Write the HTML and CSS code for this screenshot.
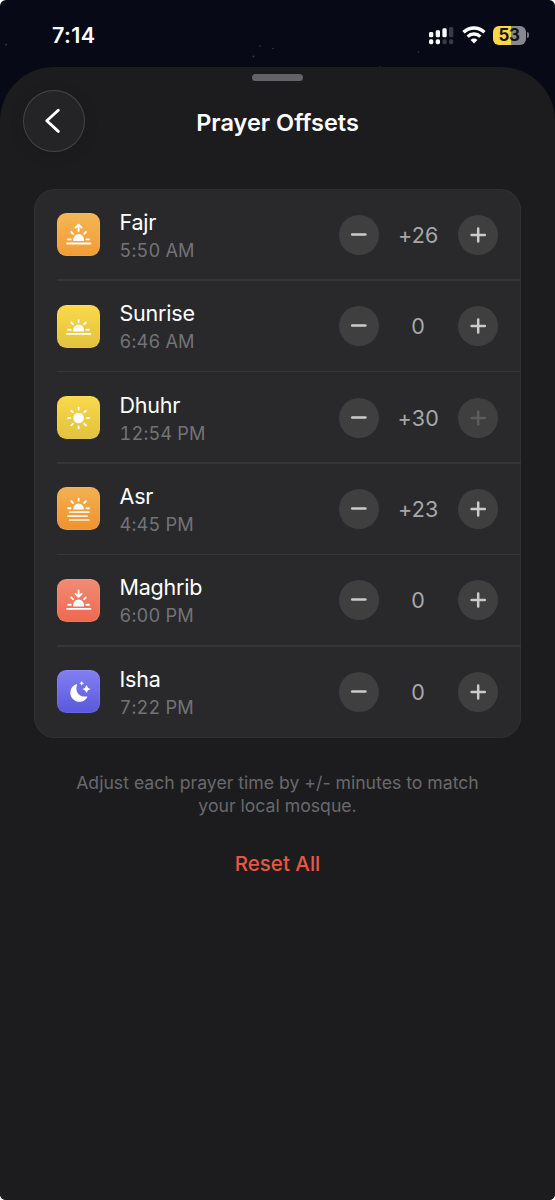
FILE: index.html
```html
<!DOCTYPE html>
<html lang="en">
<head>
<meta charset="utf-8">
<title>Prayer Offsets</title>
<link rel="stylesheet" href="styles.css">
</head>
<body>
<svg width="0" height="0" class="defs">
  <defs>
    <g id="halfsun">
      <path d="M16.200 28v-1.500a5.400 5.400 0 0 1 10.800 0v1.500z" fill="#fff"/>
      <path d="M11.200 26.400h2.600M29.400 26.400h2.600M14.300 19l1.700 1.800M28.900 19l-1.700 1.800" class="ln"/>
    </g>
    <path id="horizon" d="M10 30.500h23.400" class="ln"/>
    <path id="topray" d="M21.600 16.800v1.800" class="ln"/>
    <path id="minus" d="M13.200 19.600h13.200" class="sign"/>
    <path id="plus" d="M13.600 20h13.200M20.200 13.400v13.200" class="sign"/>
  </defs>
</svg>
<div class="screen">
  <svg class="stars" width="555" height="70" viewBox="0 0 555 70" fill="#3a3d4c">
    <circle cx="6" cy="44.500" r=".9"/><circle cx="260" cy="46" r=".8"/><circle cx="273" cy="48.500" r=".8"/><circle cx="253.500" cy="56.500" r=".9"/><circle cx="418.500" cy="52" r=".8"/><circle cx="380" cy="67" r=".8"/>
  </svg>
  <header class="status">
    <span class="clock">7:14</span>
    <div class="indicators">
      <svg class="signal" width="25" height="19" viewBox="0 0 25 19" fill="#fff">
        <rect x="0" y="6" width="4.300" height="5.300" rx="1.400"/><rect x="6.700" y="4.300" width="4.300" height="7" rx="1.400"/><rect x="13.400" y="2.300" width="4.300" height="9" rx="1.400"/><rect x="20" y="1" width="4.300" height="10.300" rx="1.400" fill="#383a45"/>
        <rect x="0" y="13.300" width="4.300" height="5" rx="1.700"/><rect x="6.700" y="13.300" width="4.300" height="5" rx="1.700"/><rect x="13.400" y="13.300" width="4.300" height="5" rx="1.700" fill="#383a45"/><rect x="20" y="13.300" width="4.300" height="5" rx="1.700" fill="#383a45"/>
      </svg>
      <svg class="wifi" width="24" height="18" viewBox="0 0 24 18" fill="none" stroke="#fff" stroke-width="3.300">
        <path d="M1.500 6.300a15 15 0 0 1 21 0"/><path d="M5.600 10.600a9.200 9.200 0 0 1 12.800 0"/><path d="M12 17.400l-3.400-3.400a4.800 4.800 0 0 1 6.800 0z" fill="#fff" stroke="none"/>
      </svg>
      <div class="battery"><span>53</span></div>
      <i class="nub"></i>
    </div>
  </header>
  <main class="sheet">
    <div class="grabber"></div>
    <div class="nav">
      <button class="back" aria-label="Back"><svg width="62" height="62" viewBox="0 0 62 62"><path d="M35.300 20.200L23.800 30.800l11.500 10.600" fill="none" stroke="#fff" stroke-width="2.900" stroke-linecap="round" stroke-linejoin="round"/></svg></button>
      <h1>Prayer Offsets</h1>
    </div>
    <section class="card">
      <div class="row">
        <svg class="tile orange" viewBox="0 0 43 43"><use href="#halfsun"/><use href="#horizon"/><path d="M21.600 12v6M18.600 14.600l3-3 3 3" class="ln"/></svg>
        <div class="label"><b>Fajr</b><small>5:50 AM</small></div>
        <div class="stepper"><svg viewBox="0 0 40 40"><use href="#minus"/></svg><output>+26</output><svg viewBox="0 0 40 40"><use href="#plus"/></svg></div>
      </div>
      <div class="row">
        <svg class="tile yellow" viewBox="0 0 43 43"><g transform="translate(0 -1.600)"><use href="#halfsun"/><use href="#horizon"/><use href="#topray"/></g></svg>
        <div class="label"><b>Sunrise</b><small>6:46 AM</small></div>
        <div class="stepper"><svg viewBox="0 0 40 40"><use href="#minus"/></svg><output>0</output><svg viewBox="0 0 40 40"><use href="#plus"/></svg></div>
      </div>
      <div class="row">
        <svg class="tile yellow" viewBox="0 0 43 43"><circle cx="21.600" cy="22" r="5.300" fill="#fff"/><path d="M21.600 11.600v2M21.600 30.400v2M11.200 22h2M30 22h2M14.300 14.700l1.500 1.500M27.400 27.800l1.500 1.500M28.900 14.700l-1.500 1.500M15.800 27.800l-1.500 1.500" class="ln"/></svg>
        <div class="label"><b>Dhuhr</b><small>12:54 PM</small></div>
        <div class="stepper"><svg viewBox="0 0 40 40"><use href="#minus"/></svg><output>+30</output><svg viewBox="0 0 40 40" class="off"><use href="#plus"/></svg></div>
      </div>
      <div class="row">
        <svg class="tile orange deep" viewBox="0 0 43 43"><path d="M16.400 22.600v-.8a5.200 5.200 0 0 1 10.400 0v.8z" fill="#fff"/><path d="M11.200 21.300h2.400M29.600 21.300h2.400M14.300 14.200l1.700 1.800M28.900 14.200l-1.700 1.800M21.600 11.800v1.800" class="ln"/><path d="M12.700 25.200h19.200M11 29.100h19.200M12.700 33h19.200" class="ln haze"/></svg>
        <div class="label"><b>Asr</b><small>4:45 PM</small></div>
        <div class="stepper"><svg viewBox="0 0 40 40"><use href="#minus"/></svg><output>+23</output><svg viewBox="0 0 40 40"><use href="#plus"/></svg></div>
      </div>
      <div class="row">
        <svg class="tile red" viewBox="0 0 43 43"><g transform="translate(0 -.6)"><use href="#halfsun"/><use href="#horizon"/></g><path d="M21.600 11.500v6M18.600 14.800l3 3 3-3" class="ln"/></svg>
        <div class="label"><b>Maghrib</b><small>6:00 PM</small></div>
        <div class="stepper"><svg viewBox="0 0 40 40"><use href="#minus"/></svg><output>0</output><svg viewBox="0 0 40 40"><use href="#plus"/></svg></div>
      </div>
      <div class="row">
        <svg class="tile indigo" viewBox="0 0 43 43" fill="#fff"><path d="M19.300 14.200c.6-.2 1 .2.700.8-1.100 2.800-.8 6.500 1.200 8.700 2.200 2.500 5.200 3.300 8.300 2.700.7-.1 1 .3.800.9a9.100 9.100 0 1 1-11-13.100z"/><path d="M24.700 10.900q.5 1.900 2.400 2.400-1.900.5-2.400 2.400-.5-1.900-2.400-2.400 1.900-.5 2.400-2.400zM29.500 15q.8 3.200 4 4-3.200.8-4 4-.8-3.200-4-4 3.200-.8 4-4z"/></svg>
        <div class="label"><b>Isha</b><small>7:22 PM</small></div>
        <div class="stepper"><svg viewBox="0 0 40 40"><use href="#minus"/></svg><output>0</output><svg viewBox="0 0 40 40"><use href="#plus"/></svg></div>
      </div>
    </section>
    <p class="hint">Adjust each prayer time by +/- minutes to match<br>your local mosque.</p>
    <button class="reset">Reset All</button>
  </main>
</div>
</body>
</html>
```
FILE: styles.css
```css
* { box-sizing: border-box; }
body { margin: 0; background: #fff; font-family: Inter, "Liberation Sans", sans-serif; color: #fff; }
button { border: 0; padding: 0; background: none; font: inherit; color: inherit; }
.defs, .stars { position: absolute; }
.ln { fill: none; stroke: #fff; stroke-width: 1.9; stroke-linecap: round; stroke-linejoin: round; }
.haze { stroke-width: 1.7; stroke: #fff3df; }
.screen { position: relative; width: 555px; height: 1200px; border-radius: 6px; overflow: hidden; background: #070a16; }
.status { height: 67px; padding: 0 26.500px 0 52px; display: flex; justify-content: space-between; }
.clock { font-size: 21.5px; font-weight: 600; line-height: 26px; margin-top: 22px; letter-spacing: .4px; }
.indicators { display: flex; padding-top: 25.5px; }
.signal { margin-right: 8px; }
.wifi { margin-right: 6.5px; }
.battery { width: 33px; height: 19px; border-radius: 6px; background: linear-gradient(90deg, #fbd746 54%, #88888e 54%); color: #14130f; font-size: 17px; font-weight: 700; line-height: 19px; text-align: center; letter-spacing: -.3px; }
.nub { width: 2px; height: 6px; margin: 6.500px 0 0 1px; border-radius: 0 3px 3px 0; background: #77777d; }
.sheet { position: relative; height: 1133px; background: #1c1c1e; border-radius: 54px 54px 0 0; display: flex; flex-direction: column; align-items: center; }
.grabber { width: 51px; height: 7px; margin-top: 7px; border-radius: 4px; background: #636367; flex: none; }
.nav { width: 100%; height: 62px; margin-top: 9px; padding: 0 23px; display: grid; grid-template-columns: 62px 1fr 62px; flex: none; }
.back { width: 62px; height: 62px; border-radius: 50%; background: #242426; box-shadow: inset 0 0 0 1px #444446, 0 3px 16px rgba(0,0,0,.1); }
.back svg { display: block; }
h1 { margin: 2px 0 0; font-size: 23.500px; font-weight: 600; line-height: 62px; text-align: center; letter-spacing: 0; }
.card { width: 487px; height: 548.500px; margin-top: 37px; border-radius: 21px; background: #29292b; box-shadow: inset 0 0 0 1px #303032; display: flex; flex-direction: column; flex: none; }
.row { flex: 1; position: relative; display: flex; align-items: center; padding: 0 23px; }
.row + .row::before { content: ""; position: absolute; left: 23px; right: 0; top: -1px; height: 1.500px; background: #363638; }
.tile { width: 43px; height: 43px; border-radius: 9.500px; margin-right: 19.500px; flex: none; box-shadow: inset 0 0 0 1px rgba(255,255,255,.08); }
.orange { background: linear-gradient(#f5b756, #f29b36); }
.deep { background: linear-gradient(#f3b052, #ef9230); }
.yellow { background: linear-gradient(#fad94c, #e2c13e); }
.red { background: linear-gradient(#f28c75, #ef684f); }
.indigo { background: linear-gradient(#8280f2, #5a57dc); }
.label { flex: 1; display: flex; flex-direction: column; }
.label b { font-size: 21.500px; font-weight: 400; line-height: 28px; margin-top: 3px; letter-spacing: -.2px; }
.label small { font-size: 18.200px; line-height: 29px; color: #737376; font-variant-numeric: tabular-nums; letter-spacing: .15px; }
.stepper { display: flex; align-items: center; }
.stepper svg { width: 40px; height: 40px; border-radius: 50%; background: #3f3f40; --sign: #cbcbcc; }
.stepper svg.off { --sign: #5c5c5e; }
.sign { fill: none; stroke: var(--sign); stroke-width: 2.500; stroke-linecap: round; }
.stepper output { width: 79.500px; text-align: center; font-size: 21.500px; color: #a7a7a9; letter-spacing: .2px; }
.hint { margin: 34.500px 0 0; text-align: center; font-size: 17.650px; line-height: 22.500px; color: #69696c; }
.reset { margin-top: 34px; font-size: 20.500px; line-height: 26px; font-weight: 500; color: #ea5545; }
```
